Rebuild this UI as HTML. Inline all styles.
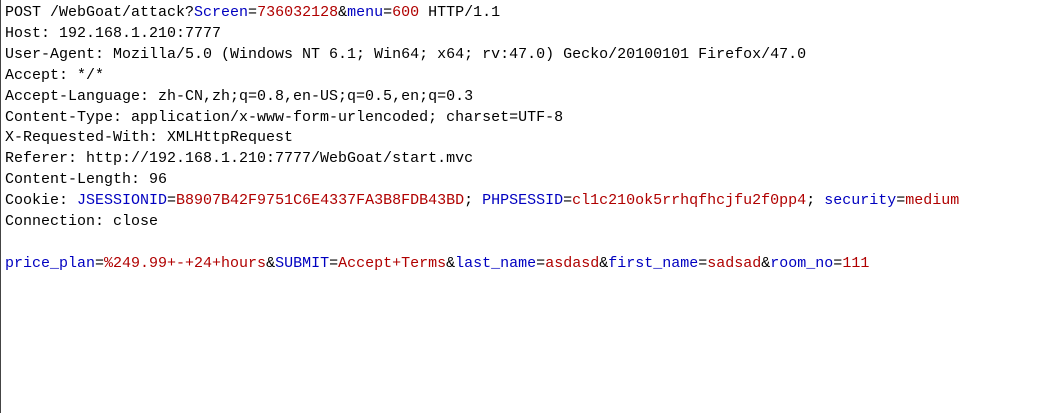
<!DOCTYPE html>
<html><head><meta charset="utf-8"><style>
html,body{margin:0;padding:0;background:#fff;width:1048px;height:413px;overflow:hidden}
body{border-left:1px solid #444;box-sizing:border-box}
pre{margin:0;padding:3px 0 0 4px;font-family:"Liberation Mono",monospace;font-size:15px;line-height:20.9px;color:#000}
.k{color:#0000c0}.v{color:#b00000}
</style></head><body><pre>POST /WebGoat/attack?<span class="k">Screen</span>=<span class="v">736032128</span>&amp;<span class="k">menu</span>=<span class="v">600</span> HTTP/1.1
Host: 192.168.1.210:7777
User-Agent: Mozilla/5.0 (Windows NT 6.1; Win64; x64; rv:47.0) Gecko/20100101 Firefox/47.0
Accept: */*
Accept-Language: zh-CN,zh;q=0.8,en-US;q=0.5,en;q=0.3
Content-Type: application/x-www-form-urlencoded; charset=UTF-8
X-Requested-With: XMLHttpRequest
Referer: http://192.168.1.210:7777/WebGoat/start.mvc
Content-Length: 96
Cookie: <span class="k">JSESSIONID</span>=<span class="v">B8907B42F9751C6E4337FA3B8FDB43BD</span>; <span class="k">PHPSESSID</span>=<span class="v">cl1c210ok5rrhqfhcjfu2f0pp4</span>; <span class="k">security</span>=<span class="v">medium</span>
Connection: close

<span class="k">price_plan</span>=<span class="v">%249.99+-+24+hours</span>&amp;<span class="k">SUBMIT</span>=<span class="v">Accept+Terms</span>&amp;<span class="k">last_name</span>=<span class="v">asdasd</span>&amp;<span class="k">first_name</span>=<span class="v">sadsad</span>&amp;<span class="k">room_no</span>=<span class="v">111</span>
</pre></body></html>
